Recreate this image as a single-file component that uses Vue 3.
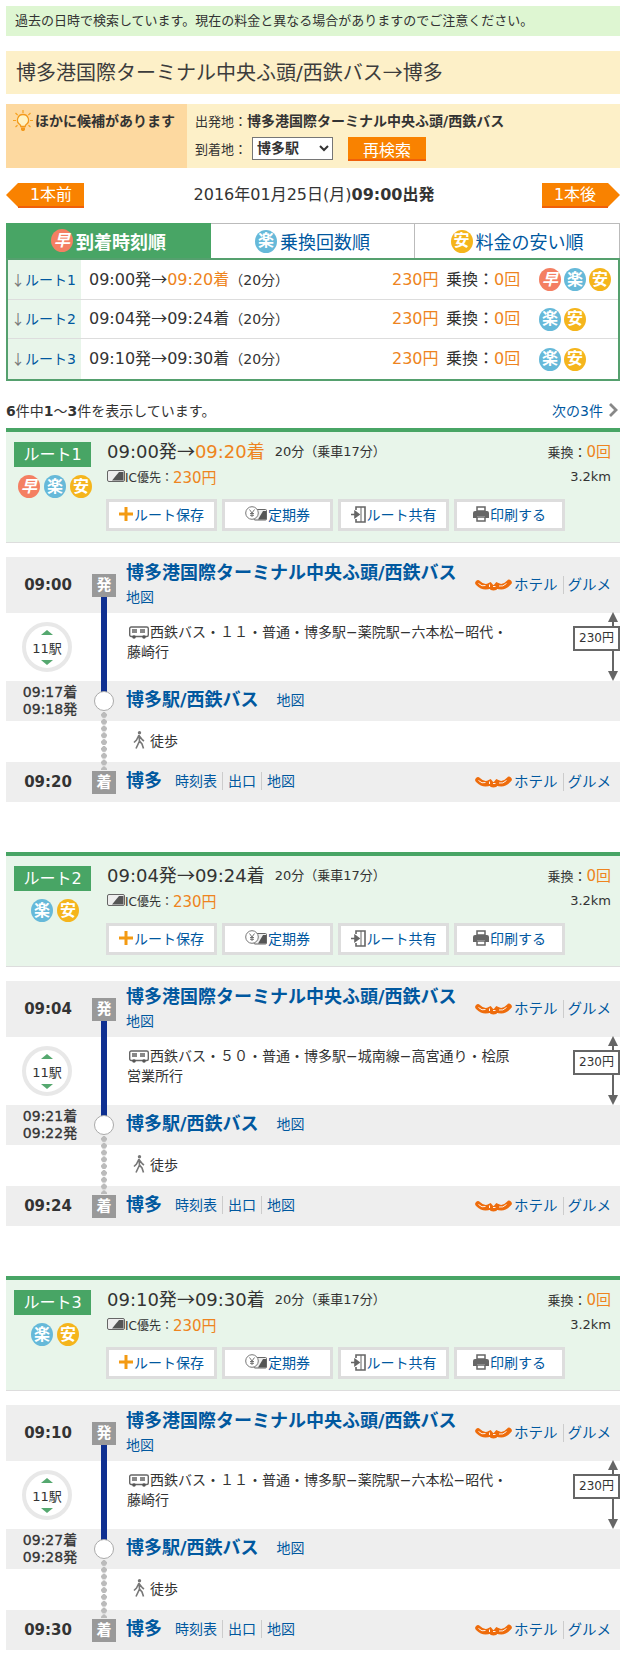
<script setup>
const tabs = [
  { key: 'haya', label: '到着時刻順', active: true },
  { key: 'raku', label: '乗換回数順' },
  { key: 'yasu', label: '料金の安い順' },
]
const marks = { haya: '早', raku: '楽', yasu: '安' }
const routes = [
  {
    no: 1, dep: '09:00', arr: '09:20', viaArr: '09:17', viaDep: '09:18',
    hot: true, icons: ['haya', 'raku', 'yasu'],
    line: ['西鉄バス・１１・普通・博多駅−薬院駅−六本松−昭代・', '藤崎行'],
  },
  {
    no: 2, dep: '09:04', arr: '09:24', viaArr: '09:21', viaDep: '09:22',
    hot: false, icons: ['raku', 'yasu'],
    line: ['西鉄バス・５０・普通・博多駅−城南線−高宮通り・桧原', '営業所行'],
  },
  {
    no: 3, dep: '09:10', arr: '09:30', viaArr: '09:27', viaDep: '09:28',
    hot: false, icons: ['raku', 'yasu'],
    line: ['西鉄バス・１１・普通・博多駅−薬院駅−六本松−昭代・', '藤崎行'],
  },
]
</script>

<template>
  <div class="page">
    <p class="notice">過去の日時で検索しています。現在の料金と異なる場合がありますのでご注意ください。</p>
    <h1 class="title">博多港国際ターミナル中央ふ頭/西鉄バス<span class="arrow">→</span>博多</h1>

    <div class="cand">
      <div class="cand-l">
        <svg class="bulb" viewBox="0 0 20 22" width="20" height="22">
          <g stroke="#f6a21e" stroke-width="1.2" fill="none">
            <path d="M10 0v3M2.500 3l2.200 2.200M17.500 3l-2.200 2.200M0 10.500h3M17 10.500h3M2.500 17l2-1.800M17.500 17l-2-1.800"/>
          </g>
          <path d="M10 4.500a5.500 5.500 0 0 0-3.200 10c.8.600 1 1.300 1 2h4.400c0-.700.200-1.400 1-2a5.500 5.500 0 0 0-3.200-10z" fill="#fff3c4" stroke="#f39a1c" stroke-width="1.300"/>
          <path d="M8 17.500h4v2.300l-1 1.200H9l-1-1.200z" fill="#f39a1c"/>
        </svg>
        <b>ほかに候補があります</b>
      </div>
      <div class="cand-r">
        <div class="cand-line"><span class="small">出発地：</span><b>博多港国際ターミナル中央ふ頭/西鉄バス</b></div>
        <div class="cand-line second">
          <span class="small">到着地：</span>
          <select class="sel"><option>博多駅</option></select>
          <button class="again" type="button">再検索</button>
        </div>
      </div>
    </div>

    <div class="nav">
      <span class="step prev">1本前</span>
      <span class="when">2016年01月25日(月)<b>09:00出発</b></span>
      <span class="step next">1本後</span>
    </div>

    <div class="tabs">
      <div v-for="t in tabs" :key="t.key" class="tab" :class="{ on: t.active }">
        <i class="mark" :class="t.key">{{ marks[t.key] }}</i><span>{{ t.label }}</span>
      </div>
    </div>
    <div class="list">
      <div v-for="r in routes" :key="r.no" class="list-row">
        <div class="list-no"><span class="down arrow">↓</span><span class="link">ルート{{ r.no }}</span></div>
        <div class="list-time">
          {{ r.dep }}発<span class="arrow">→</span><span :class="{ orange: r.hot }">{{ r.arr }}着</span><small>（20分）</small>
        </div>
        <div class="list-price orange">230円</div>
        <div class="list-trans">乗換：<span class="orange">0回</span></div>
        <div class="list-icons">
          <i v-for="ic in r.icons" :key="ic" class="mark" :class="ic">{{ marks[ic] }}</i>
        </div>
      </div>
    </div>

    <div class="count">
      <span><b>6</b>件中<b>1</b>〜<b>3</b>件を表示しています。</span>
      <span class="link more">次の3件<svg class="chev" viewBox="0 0 10 14" width="10" height="14"><path d="M2 1l6 6-6 6" fill="none" stroke="#888" stroke-width="2.800"/></svg></span>
    </div>

    <section v-for="r in routes" :key="'d' + r.no" class="route">
      <div class="sum">
        <div class="sum-l">
          <div class="tag">ルート{{ r.no }}</div>
          <div class="sum-icons">
            <i v-for="ic in r.icons" :key="ic" class="mark" :class="ic">{{ marks[ic] }}</i>
          </div>
        </div>
        <div class="sum-r">
          <div class="sum-line one">
            <span class="big">{{ r.dep }}発<span class="arrow">→</span><span :class="{ orange: r.hot }">{{ r.arr }}着</span></span>
            <span class="dur">20分（乗車17分）</span>
            <span class="sum-trans">乗換：<span class="orange bump">0回</span></span>
          </div>
          <div class="sum-line two">
            <svg class="ic-card" viewBox="0 0 18 12" width="18" height="12">
              <rect x=".5" y=".5" width="17" height="11" rx="1.500" fill="#eee" stroke="#666"/>
              <path d="M5 10.500L12 2h4.500v8.500z" fill="#555"/>
            </svg>
            <span class="ic-label">IC優先：</span><span class="orange fare">230円</span>
            <span class="dist">3.2km</span>
          </div>
          <div class="btns">
            <button type="button" class="btn">
              <svg viewBox="0 0 14 14" width="14" height="14"><path d="M5.500 0h3v5.500H14v3H8.500V14h-3V8.500H0v-3h5.500z" fill="#f39a12"/></svg>ルート保存
            </button>
            <button type="button" class="btn">
              <svg viewBox="0 0 22 16" width="22" height="16">
                <rect x="9" y="3.500" width="12.500" height="10.500" rx="1" fill="#eee" stroke="#666"/>
                <path d="M13 13.500l5-8.500h3v8.500z" fill="#555"/>
                <circle cx="7" cy="7" r="6.300" fill="#fff" stroke="#777"/>
                <path d="M4.500 3.500L7 7l2.500-3.500M7 7v4M5 7.500h4M5 9.300h4" fill="none" stroke="#666" stroke-width=".9"/>
              </svg>定期券
            </button>
            <button type="button" class="btn">
              <svg viewBox="0 0 15 17" width="15" height="17">
                <path d="M5 4V1h9v15H5v-3" fill="none" stroke="#666" stroke-width="1.600"/>
                <path d="M0 8.500h6M4 5.500l4 3-4 3z" stroke="#666" stroke-width="1.600" fill="#666"/>
                <path d="M10 1v15" stroke="#666" stroke-width="1"/>
              </svg>ルート共有
            </button>
            <button type="button" class="btn">
              <svg viewBox="0 0 16 16" width="16" height="16">
                <path d="M4 1h8v4H4zM4 11h8v4H4z" fill="#fff" stroke="#666" stroke-width="1.500"/>
                <path d="M2 5h12a2 2 0 0 1 2 2v5h-4v-2H4v2H0V7a2 2 0 0 1 2-2z" fill="#666"/>
              </svg>印刷する
            </button>
          </div>
        </div>
      </div>

      <div class="detail">
        <div class="track-bus"></div>
        <div class="track-walk"></div>

        <div class="st dep-row">
          <div class="st-time"><b>{{ r.dep }}</b></div>
          <div class="st-gut"><span class="badge">発</span></div>
          <div class="st-main stack">
            <a class="st-name">博多港国際ターミナル中央ふ頭/西鉄バス</a>
            <a class="link t14">地図</a>
          </div>
          <div class="st-ext">
            <svg class="logo" viewBox="0 0 37 13" width="37" height="13">
              <path d="M3 4Q9 10 15 6.500Q18.500 11 22 6.500Q28 10 34 3.500" fill="none" stroke="#ee6c0c" stroke-width="5.500" stroke-linecap="round"/>
              <path d="M3.500 4.500Q7 8 10.500 6.500M14.500 5.500v2.500M18 7.500h2.500M24 7q4 1 7.500-2.500" fill="none" stroke="#fff" stroke-width=".9"/>
            </svg>
            <a class="link">ホテル</a><i class="bar"></i><a class="link">グルメ</a>
          </div>
        </div>

        <div class="leg">
          <div class="stops"><i class="tri up"></i><span>11駅</span><i class="tri dn"></i></div>
          <div class="leg-text">
            <svg class="bus" viewBox="0 0 20 13" width="20" height="13">
              <rect x=".7" y="1" width="18.600" height="9.500" rx="1.500" fill="#fff" stroke="#666" stroke-width="1.400"/>
              <path d="M3 3h5v4H3zM11 3h5v4h-5z" fill="#888"/>
              <circle cx="5" cy="11" r="1.800" fill="#555"/><circle cx="15" cy="11" r="1.800" fill="#555"/>
            </svg>{{ r.line[0] }}<br>{{ r.line[1] }}
          </div>
          <div class="fare-span">
            <i class="fare-head"></i><i class="fare-stem top"></i>
            <span class="fare-box">230円</span>
            <i class="fare-stem"></i><i class="fare-foot"></i>
          </div>
        </div>

        <div class="st via-row">
          <div class="st-time via-time">{{ r.viaArr }}着<br>{{ r.viaDep }}発</div>
          <div class="st-gut"><span class="node"></span></div>
          <div class="st-main">
            <a class="st-name">博多駅/西鉄バス</a>
            <a class="link t14 after">地図</a>
          </div>
        </div>

        <div class="walk">
          <svg class="man" viewBox="0 0 12 18" width="12" height="18">
            <circle cx="6.500" cy="1.800" r="1.700" fill="#777"/>
            <path d="M6 4L3.500 9 1 11.500M6 4l.5 6L3 17.500M6.500 10l2.500 3 1.500 4.500M6 4.500L9.500 9l1.500 1" fill="none" stroke="#777" stroke-width="1.600"/>
          </svg>
          <span>徒歩</span>
        </div>

        <div class="st arr-row">
          <div class="st-time"><b>{{ r.arr }}</b></div>
          <div class="st-gut"><span class="badge">着</span></div>
          <div class="st-main">
            <a class="st-name">博多</a>
            <span class="links"><a class="link t14">時刻表</a><i class="bar"></i><a class="link t14">出口</a><i class="bar"></i><a class="link t14">地図</a></span>
          </div>
          <div class="st-ext">
            <svg class="logo" viewBox="0 0 37 13" width="37" height="13">
              <path d="M3 4Q9 10 15 6.500Q18.500 11 22 6.500Q28 10 34 3.500" fill="none" stroke="#ee6c0c" stroke-width="5.500" stroke-linecap="round"/>
              <path d="M3.500 4.500Q7 8 10.500 6.500M14.500 5.500v2.500M18 7.500h2.500M24 7q4 1 7.500-2.500" fill="none" stroke="#fff" stroke-width=".9"/>
            </svg>
            <a class="link">ホテル</a><i class="bar"></i><a class="link">グルメ</a>
          </div>
        </div>
      </div>
    </section>
  </div>
</template>

<style>
html, body { margin: 0; background: #fff; }
</style>

<style scoped>
.page {
  box-sizing: border-box;
  width: 628px;
  height: 1680px;
  padding: 6px 8px 0 6px;
  font-family: "DejaVu Sans", "Noto Sans CJK JP", sans-serif;
  font-size: 14px;
  color: #333;
}
p, h1 { margin: 0; }
i { font-style: normal; }
a { text-decoration: none; }
.link { color: #00589f; }
.orange { color: #ee8420; }
.arrow { font-family: "Noto Sans CJK JP", sans-serif; }

.notice {
  height: 30px;
  line-height: 29px;
  padding-left: 9px;
  background: #def6d2;
  font-size: 13px;
}
.title {
  margin-top: 15px;
  height: 43px;
  line-height: 42px;
  padding-left: 10px;
  background: #fdf0c8;
  font-size: 20px;
  font-weight: 400;
  color: #3c3c3c;
}
.cand {
  display: flex;
  margin-top: 10px;
  height: 64px;
  background: #fdf0c8;
}
.cand-l {
  box-sizing: border-box;
  width: 181px;
  padding: 6px 0 0 7px;
  display: flex;
  align-items: flex-start;
  gap: 2px;
  background: #fdd9a0;
}
.cand-l b { line-height: 22px; }
.cand-r { padding: 5px 0 0 8px; }
.cand-line { display: flex; align-items: center; height: 22px; }
.cand-line.second { margin-top: 6px; }
.small { font-size: 13px; }
.second .small { margin-right: 5px; }
.sel {
  box-sizing: border-box;
  width: 81px;
  height: 23px;
  font: bold 14px "DejaVu Sans", "Noto Sans CJK JP", sans-serif;
  color: #333;
  background: #fff;
  border: 1px solid #767676;
  border-radius: 0;
}
.again {
  margin-left: 15px;
  margin-top: 2px;
  width: 78px;
  height: 24px;
  padding: 0;
  border: 0;
  border-bottom: 2px solid #f0600a;
  background: #f98200;
  color: #fff;
  font: 16px "DejaVu Sans", "Noto Sans CJK JP", sans-serif;
}

.nav {
  display: flex;
  align-items: center;
  justify-content: space-between;
  margin-top: 15px;
  height: 25px;
}
.when { font-size: 16px; margin: -5px 0 0 2px; }
.step {
  position: relative;
  box-sizing: border-box;
  display: block;
  width: 66px;
  height: 25px;
  line-height: 24px;
  text-align: center;
  color: #fff;
  font-size: 16px;
  background: #f98200;
  border-bottom: 2px solid #f0600a;
}
.step.prev { margin-left: 12px; }
.step.next { margin-right: 12px; }
.step::before {
  content: "";
  position: absolute;
  top: 0;
  border-top: 12.500px solid transparent;
  border-bottom: 12.500px solid transparent;
}
.step.prev::before { left: -12px; border-right: 12px solid #f98200; }
.step.next::before { right: -12px; border-left: 12px solid #f98200; }

.tabs { display: flex; margin-top: 15px; height: 35px; }
.tab {
  box-sizing: border-box;
  flex: 0 0 204px;
  display: flex;
  align-items: center;
  justify-content: center;
  gap: 3px;
  font-size: 18px;
  color: #00589f;
  border-top: 1px solid #bbb;
  border-right: 1px solid #bbb;
}
.tab:last-child { flex-basis: 205px; }
.tab.on {
  flex-basis: 205px;
  background: #48a565;
  border: 0;
  color: #fff;
  font-weight: 700;
}
.mark {
  flex: none;
  display: inline-flex;
  align-items: center;
  justify-content: center;
  width: 22px;
  height: 23px;
  border-radius: 50%;
  color: #fff;
  font-size: 16px;
  font-weight: 700;
  line-height: 1;
}
.mark.haya { background: #f47f62; font-style: italic; }
.mark.raku { background: #66b9d9; }
.mark.yasu { background: #f5b51c; }

.list { border: 2px solid #55a06e; }
.list-row {
  box-sizing: border-box;
  display: flex;
  align-items: center;
  height: 39px;
  border-top: 1px solid #ddd;
  font-size: 16px;
}
.list-row:first-child { border-top: 0; }
.list-row:last-child { height: 41px; }
.list-no {
  box-sizing: border-box;
  align-self: stretch;
  display: flex;
  align-items: center;
  width: 73px;
  padding: 0 0 2px 3px;
  background: #e8f5ea;
  font-size: 14px;
}
.down { color: #777; width: 14px; font-size: 14px; }
.list-time, .list-price, .list-trans { margin-top: -4px; }
.list-time { width: 311px; padding-left: 8px; box-sizing: border-box; white-space: nowrap; }
.list-time small { font-size: 14px; }
.list-price { width: 54px; }
.list-trans { width: 93px; }
.list-icons { display: flex; gap: 3px; }

.count {
  display: flex;
  justify-content: space-between;
  align-items: center;
  margin-top: 19px;
  height: 20px;
}
.more { display: flex; align-items: center; gap: 5px; margin-right: 2px; }

.route + .route { margin-top: 50px; }
.count + .route { margin-top: 8px; }
.sum {
  box-sizing: border-box;
  display: flex;
  height: 115px;
  padding: 10px 0 0 8px;
  background: #e8f5ea;
  border-top: 4px solid #48a565;
  border-bottom: 1px solid #ddd;
}
.sum-l { width: 77px; }
.tag {
  height: 25px;
  line-height: 25px;
  text-align: center;
  background: #48a565;
  color: #fff;
  font-size: 16px;
}
.sum-icons {
  display: flex;
  justify-content: center;
  gap: 4px;
  margin-top: 8px;
  padding-left: 5px;
}
.sum-r { margin: -3px 0 0 16px; width: 504px; }
.sum-line { display: flex; align-items: center; }
.sum-line.one { height: 22px; }
.sum-line.two { height: 22px; margin-top: 4px; }
.big { font-size: 18px; }
.dur { margin-left: 10px; font-size: 13px; }
.sum-trans { margin-left: auto; font-size: 13px; }
.bump { font-size: 15px; }
.ic-card { flex: none; }
.ic-label { font-size: 12px; }
.fare { font-size: 15px; }
.dist { margin-left: auto; font-size: 13px; }
.btns { display: flex; gap: 5px; margin-top: 12px; margin-left: -1px; }
.btn {
  box-sizing: border-box;
  display: flex;
  align-items: center;
  justify-content: center;
  gap: 1px;
  width: 111px;
  height: 32px;
  padding: 0 0 2px;
  background: #fff;
  border: 3px solid #ddd;
  color: #00589f;
  font: 14px "DejaVu Sans", "Noto Sans CJK JP", sans-serif;
}

.detail { position: relative; margin-top: 14px; }
.track-bus {
  position: absolute;
  z-index: 1;
  left: 95px;
  top: 39px;
  width: 6px;
  height: 96px;
  background: #0f3091;
}
.track-walk {
  position: absolute;
  z-index: 1;
  left: 95px;
  top: 155px;
  width: 6px;
  height: 58px;
  background: radial-gradient(circle at 3px 3px, #bbb 2.700px, transparent 3px) 0 0 / 6px 6.800px repeat-y;
}
.st {
  display: flex;
  align-items: center;
  background: #eee;
}
.dep-row { height: 56px; }
.via-row, .arr-row { height: 40px; }
.st-time {
  flex: none;
  width: 84px;
  text-align: center;
  font-size: 15px;
  white-space: nowrap;
}
.via-time {
  box-sizing: border-box;
  padding-left: 4px;
  font-size: 14px;
  line-height: 17px;
  -webkit-text-stroke: .3px #333;
}
.st-gut {
  flex: none;
  position: relative;
  z-index: 2;
  display: flex;
  justify-content: center;
  width: 28px;
  margin-right: 8px;
}
.badge {
  width: 24px;
  height: 23px;
  line-height: 23px;
  text-align: center;
  background: #999;
  color: #fff;
  font-weight: 700;
  font-size: 15px;
}
.node {
  box-sizing: border-box;
  width: 20px;
  height: 20px;
  border-radius: 50%;
  background: #fff;
  border: 1px solid #aaa;
}
.st-main { display: flex; align-items: center; flex: 1; margin-top: -3px; }
.st-main.stack { flex-direction: column; align-items: flex-start; margin-top: -4px; }
.stack .t14 { margin-top: 1px; }
.st-name { color: #00589f; font-size: 18px; font-weight: 700; line-height: 26px; }
.t14 { font-size: 14px; line-height: 20px; }
.after { margin-left: 18px; }
.links { display: flex; align-items: center; margin-left: 13px; }
.bar {
  flex: none;
  width: 1px;
  height: 18px;
  margin: 0 5px;
  background: #ccc;
}
.st-ext {
  flex: none;
  display: flex;
  align-items: center;
  padding-right: 9px;
  font-size: 14.500px;
  white-space: nowrap;
}
.st-ext a { margin-top: -4px; }
.st-ext .bar { margin: 0 4px 0 5px; }
.logo { margin-right: 2px; flex: none; }

.leg { display: flex; height: 68px; }
.stops {
  box-sizing: border-box;
  flex: none;
  width: 50px;
  height: 50px;
  margin: 9px 0 0 16px;
  border: 4px solid #e8e8e8;
  border-radius: 50%;
  display: flex;
  flex-direction: column;
  align-items: center;
  justify-content: center;
  font-size: 13px;
  gap: 3px;
}
.tri { width: 0; height: 0; border-left: 6px solid transparent; border-right: 6px solid transparent; }
.tri.up { border-bottom: 5px solid #55a86f; }
.tri.dn { border-top: 5px solid #55a86f; }
.leg-text {
  margin: 9px 0 0 55px;
  line-height: 20px;
  white-space: nowrap;
}
.bus { vertical-align: -2px; margin: 0 1px 0 2px; }
.fare-span {
  flex: none;
  margin: -1px 0 0 auto;
  width: 47px;
  height: 69px;
  display: flex;
  flex-direction: column;
  align-items: flex-end;
}
.fare-head, .fare-foot {
  flex: none;
  width: 0; height: 0;
  margin-right: 2px;
  border-left: 5px solid transparent;
  border-right: 5px solid transparent;
}
.fare-head { border-bottom: 10px solid #666; }
.fare-foot { border-top: 10px solid #666; }
.fare-stem { width: 2px; margin-right: 6px; background: #666; flex: 1 1 auto; }
.fare-stem.top { flex: 0 0 4px; }
.fare-box {
  box-sizing: border-box;
  flex: none;
  width: 47px;
  height: 25px;
  line-height: 21px;
  text-align: center;
  font-size: 12px;
  border: 2px solid #666;
  background: #fff;
}
.walk {
  box-sizing: border-box;
  display: flex;
  align-items: center;
  height: 41px;
  padding: 0 0 4px 127px;
  gap: 5px;
}
</style>
